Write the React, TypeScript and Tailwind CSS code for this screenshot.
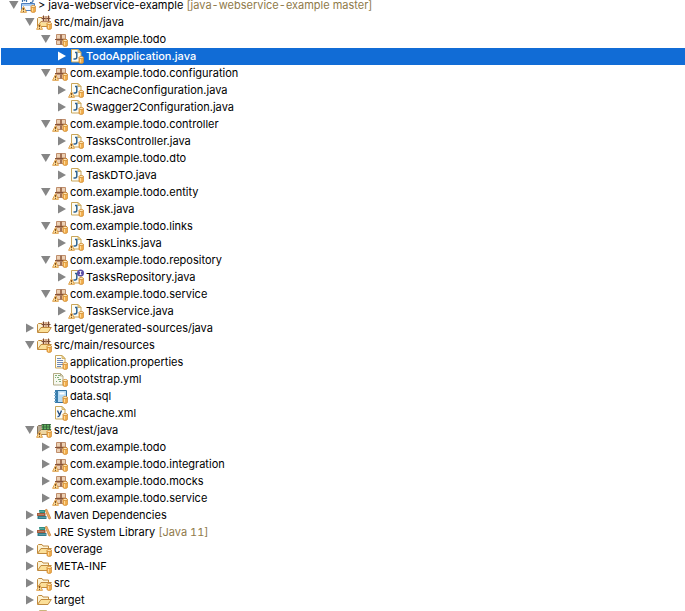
import { useState, type ReactNode } from 'react';

type IconName =
  | 'project'
  | 'source'
  | 'sourceFolder'
  | 'testSource'
  | 'package'
  | 'java'
  | 'javaInterface'
  | 'text'
  | 'yml'
  | 'sql'
  | 'xml'
  | 'library'
  | 'folder'
  | 'file';

type Item = {
  label: string;
  level: number;
  icon: IconName;
  open?: boolean;
  leaf?: boolean;
  warning?: boolean;
  plain?: boolean;
  note?: string;
};

const items: Item[] = [
  { label: '> java-webservice-example', level: 0, icon: 'project', open: true, warning: true, note: '[java-webservice-example master]' },
  { label: 'src/main/java', level: 1, icon: 'source', open: true, warning: true },
  { label: 'com.example.todo', level: 2, icon: 'package', open: true },
  { label: 'TodoApplication.java', level: 3, icon: 'java' },
  { label: 'com.example.todo.configuration', level: 2, icon: 'package', open: true, warning: true },
  { label: 'EhCacheConfiguration.java', level: 3, icon: 'java', warning: true },
  { label: 'Swagger2Configuration.java', level: 3, icon: 'java' },
  { label: 'com.example.todo.controller', level: 2, icon: 'package', open: true, warning: true },
  { label: 'TasksController.java', level: 3, icon: 'java', warning: true },
  { label: 'com.example.todo.dto', level: 2, icon: 'package', open: true, warning: true },
  { label: 'TaskDTO.java', level: 3, icon: 'java' },
  { label: 'com.example.todo.entity', level: 2, icon: 'package', open: true, warning: true },
  { label: 'Task.java', level: 3, icon: 'java' },
  { label: 'com.example.todo.links', level: 2, icon: 'package', open: true, warning: true },
  { label: 'TaskLinks.java', level: 3, icon: 'java', warning: true },
  { label: 'com.example.todo.repository', level: 2, icon: 'package', open: true, warning: true },
  { label: 'TasksRepository.java', level: 3, icon: 'javaInterface', warning: true },
  { label: 'com.example.todo.service', level: 2, icon: 'package', open: true, warning: true },
  { label: 'TaskService.java', level: 3, icon: 'java', warning: true },
  { label: 'target/generated-sources/java', level: 1, icon: 'sourceFolder', plain: true },
  { label: 'src/main/resources', level: 1, icon: 'sourceFolder', open: true },
  { label: 'application.properties', level: 2, icon: 'text', leaf: true },
  { label: 'bootstrap.yml', level: 2, icon: 'yml', leaf: true },
  { label: 'data.sql', level: 2, icon: 'sql', leaf: true },
  { label: 'ehcache.xml', level: 2, icon: 'xml', leaf: true },
  { label: 'src/test/java', level: 1, icon: 'testSource', open: true, warning: true },
  { label: 'com.example.todo', level: 2, icon: 'package' },
  { label: 'com.example.todo.integration', level: 2, icon: 'package', warning: true },
  { label: 'com.example.todo.mocks', level: 2, icon: 'package', warning: true },
  { label: 'com.example.todo.service', level: 2, icon: 'package', warning: true },
  { label: 'Maven Dependencies', level: 1, icon: 'library', plain: true },
  { label: 'JRE System Library', level: 1, icon: 'library', plain: true, note: '[Java 11]' },
  { label: 'coverage', level: 1, icon: 'folder' },
  { label: 'META-INF', level: 1, icon: 'folder' },
  { label: 'src', level: 1, icon: 'folder', warning: true },
  { label: 'target', level: 1, icon: 'folder', plain: true },
  { label: '', level: 1, icon: 'file', leaf: true, plain: true },
];

const indents = ['pl-[7px]', 'pl-[23px]', 'pl-[39px]', 'pl-[55px]'];

const page = <path d="M3.5 1.500h6.500l3 3v9.500h-9.500z" fill="#fdfdf6" stroke="#c9a65a" />;
const fold = <path d="M10 1.500v3h3z" fill="#f3dc98" stroke="#c9a65a" strokeWidth=".8" />;

const letterJ = (
  <path d="M7 4.500h2.500M8.800 4.500v4.500q0 2-1.800 2H5.500" fill="none" stroke="#2f6391" strokeWidth="1.500" />
);

const folderBack = <path d="M1.500 12v-7.500l1-1h3.500l1 1.500h5.500v2.500" fill="#fdf3d3" stroke="#c08a3e" />;
const folderFront = <path d="M1.500 12.500l3.500-5h10.300l-3.300 5z" fill="#fbdf98" stroke="#c08a3e" />;

const grid = (
  <>
    <path d="M6 2h8v6.500H6z" fill="#e6c6a8" />
    <path d="M5.500 4.500h9M7.500 1.500v6.500M12.500 1.500v6.500" stroke="#7a4a33" />
    <path d="M10 2v6M6 7.500h9" stroke="#b98664" />
  </>
);

const drawings: Record<IconName, ReactNode> = {
  project: (
    <>
      <path d="M1.500 6.500h13v7h-13z" fill="#f5f9ff" stroke="#4f7fbd" />
      <path d="M2 7h12v2H2z" fill="#a9cbf0" />
      <path d="M2.500 5v-4l2 2.500 2-2.500v4M13 1v3q0 1.500-2 1.500h-1" fill="none" stroke="#3a6ea8" strokeWidth="1.200" />
    </>
  ),
  source: (
    <>
      {folderBack}
      <path d="M1.500 12.500l3.500-5h8v5z" fill="#fbdf98" stroke="#c08a3e" />
      {grid}
    </>
  ),
  sourceFolder: (
    <>
      {folderBack}
      {grid}
      {folderFront}
    </>
  ),
  testSource: (
    <>
      <path d="M1.500 12v-7.500l1-1h3.500l1 1.500h5.500v3" fill="#b9ab94" stroke="#85745c" />
      <path d="M1.500 12.500l3.500-5h10l-3 5z" fill="#eed6a0" stroke="#a88450" />
      <path d="M6 2h8.500v6H6z" fill="#5fb25c" />
      <path d="M5.500 2.500h9.500M5.500 5h9.500M7.500 2v6M10.500 2v6M13.500 2v6M6 7.500h9" stroke="#355c3a" strokeWidth=".8" />
    </>
  ),
  package: (
    <>
      <path d="M4.500 3.500h4v4.500h-4zM9.500 3.500h4v4.500h-4zM4.500 9.500h4v4h-4zM9.500 9.500h4v4h-4z" fill="#ecd0b4" stroke="#bf8e6c" />
      <path d="M3 8.500h12M9 3v11" stroke="#855339" />
    </>
  ),
  java: (
    <>
      {page}
      {fold}
      {letterJ}
    </>
  ),
  javaInterface: (
    <>
      {page}
      {letterJ}
      <circle cx="12.500" cy="4" r="3.500" fill="#5d4fa5" />
      <path d="M11.500 2.500h2M12.500 2.500v3M11.500 5.500h2" stroke="#fff" strokeWidth=".9" />
    </>
  ),
  text: (
    <>
      {page}
      {fold}
      <path d="M5 4.500h4M5 6.500h6M5 8.500h6M5 10.500h6M5 12.500h4" stroke="#7089b8" />
    </>
  ),
  yml: (
    <>
      <path d="M1.500 2.500h7l2.500 2.500v9h-9.500z" fill="#f7f8ef" stroke="#b5ad87" />
      <path d="M3 4.500h2M6 4.500h2M3 6.500h1M5 6.500h2M6 8.500h3M4 10.500h1M7 10.500h2" stroke="#7fae78" />
      <path d="M8.500 2.500v2.500h2.500" fill="none" stroke="#b5ad87" />
    </>
  ),
  sql: (
    <>
      <path d="M3.500 2.500h11v12h-11z" fill="#b9dcf5" stroke="#33709f" />
      <path d="M3 2h3v13H3z" fill="#397eae" />
      <path d="M2 4.500h2M2 7.500h2M2 10.500h2M2 13.500h2" stroke="#86b4d2" />
      <path d="M7.500 5.500h5" stroke="#fff" strokeWidth="2" />
    </>
  ),
  xml: (
    <>
      {page}
      {fold}
      <path d="M5.500 5.500l1.800 4M9.500 5.500l-2 5q-.6 1.300-2 1" fill="none" stroke="#244f88" strokeWidth="1.400" />
    </>
  ),
  library: (
    <>
      <path d="M3 3h6v3H3.500z" fill="#2f8f83" />
      <path d="M1 6h8.500v3H1z" fill="#a65c3c" />
      <path d="M1.500 9h9v3h-9z" fill="#2f7c8b" />
      <path d="M4 4.500h4M2 7.500h6M3 10.500h7" stroke="#fff" strokeOpacity=".3" strokeWidth=".8" />
      <path d="M9 3l1.800-.7 4 9-1.800.8z" fill="#f0b565" stroke="#c77a34" strokeWidth=".7" />
    </>
  ),
  folder: (
    <>
      {folderBack}
      {folderFront}
    </>
  ),
  file: <path d="M3.500 1.500h7l2.500 2.500v10h-9.500z" fill="#fdfdf6" stroke="#c9b57a" />,
};

function Cylinder() {
  return (
    <>
      <path d="M11 9.500v4.700q0 1.200 2.200 1.200t2.200-1.200V9.500z" fill="#f3b04f" stroke="#d08a30" strokeWidth=".8" />
      <path d="M12.500 10v4.500" stroke="#ffdb9a" />
      <ellipse cx="13.200" cy="9.500" rx="2.200" ry="1.100" fill="#ffe8b8" stroke="#d08a30" strokeWidth=".8" />
    </>
  );
}

function Warning() {
  return (
    <>
      <path d="M3.500 9.500L.6 15.300h5.900z" fill="#fde0a0" stroke="#dfa04a" strokeLinejoin="round" />
      <path d="M3.500 11v2.200M3.500 13.900v1" stroke="#7a5226" />
    </>
  );
}

function Icon({ item }: { item: Item }) {
  return (
    <svg viewBox="0 0 16 16" className="size-4 shrink-0 self-start" aria-hidden="true">
      {drawings[item.icon]}
      {!item.plain && <Cylinder />}
      {item.warning && <Warning />}
    </svg>
  );
}

function Arrow({ item, selected }: { item: Item; selected: boolean }) {
  return (
    <svg
      viewBox="0 0 12 12"
      className={`mt-0.5 size-3 shrink-0 self-start ${selected ? 'text-white' : 'text-[#868686]'}`}
      aria-hidden="true"
    >
      {!item.leaf && <path d={item.open ? 'M1 2h9.500l-4.750 8z' : 'M2 1.500v9l8-4.500z'} fill="currentColor" />}
    </svg>
  );
}

export default function App() {
  const [selected, setSelected] = useState(3);

  return (
    <main className="h-screen overflow-hidden bg-white pl-px font-['Inter',sans-serif] text-[11px] leading-none text-black">
      <ul className="-mt-[3px]">
        {items.map((item, index) => {
          const active = index === selected;
          return (
            <li key={index}>
              <button
                type="button"
                onClick={() => setSelected(index)}
                className={`flex h-[17px] w-full items-center text-left whitespace-nowrap ${indents[item.level]} ${
                  active ? 'bg-[#116cd6] font-medium text-white' : ''
                }`}
              >
                <Arrow item={item} selected={active} />
                <Icon item={item} />
                <span className="pl-0.5">{item.label}</span>
                {item.note && <span className="pl-[3px] text-[#8f7a4a] tabular-nums">{item.note}</span>}
              </button>
            </li>
          );
        })}
      </ul>
    </main>
  );
}
